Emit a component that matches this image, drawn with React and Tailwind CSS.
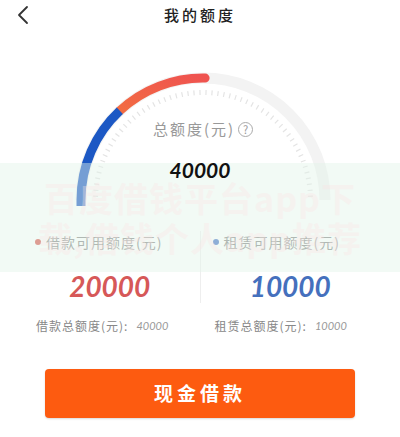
import React from 'react';

const CX = 203;
const CY = 168;
const R = 122;

const pt = (deg, r = R) => {
  const a = (deg * Math.PI) / 180;
  return [CX + r * Math.cos(a), CY - r * Math.sin(a)];
};

const Gauge = () => {
  const [lx, ly] = pt(180);
  const [rx, ry] = pt(0);
  const [bx, by] = pt(133);
  const [tx, ty] = pt(89);
  const ticks = [];
  for (let d = 178; d >= 2; d -= 3.2) {
    const [x1, y1] = pt(d, 105);
    const [x2, y2] = pt(d, 110);
    ticks.push(<line key={d} x1={x1} y1={y1} x2={x2} y2={y2} stroke="#e4e4e4" strokeWidth="1.2" />);
  }
  return (
    <svg width="400" height="185" viewBox="0 0 400 185" className="block">
      <defs>
        <linearGradient id="redArc" x1="0" y1="1" x2="1" y2="0">
          <stop offset="0" stopColor="#f26c42" />
          <stop offset="1" stopColor="#ef5350" />
        </linearGradient>
      </defs>
      <path d={`M${lx} ${ly} A${R} ${R} 0 0 1 ${rx} ${ry}`} fill="none" stroke="#f3f3f3" strokeWidth="11" />
      {ticks}
      <path d={`M${bx} ${by} A${R} ${R} 0 0 1 ${tx} ${ty}`} fill="none" stroke="url(#redArc)" strokeWidth="9" strokeLinecap="round" />
      <path d={`M${lx} ${ly + 6} L${lx} ${ly} A${R} ${R} 0 0 1 ${bx} ${by}`} fill="none" stroke="#1c58c4" strokeWidth="9" />
    </svg>
  );
};

const App = () => {
  return (
    <div className="relative w-[400px] h-[437px] bg-white overflow-hidden font-['Noto_Sans_CJK_SC','Noto_Sans',sans-serif]">
      {/* Header */}
      <div className="relative h-[32px] flex items-center justify-center">
        <svg className="absolute left-[14px] top-[4px]" width="18" height="22" viewBox="0 0 18 22">
          <path d="M13 3 L5 11 L13 19" fill="none" stroke="#333" strokeWidth="1.8" strokeLinecap="round" strokeLinejoin="round" />
        </svg>
        <span className="text-[15px] text-[#222] font-medium tracking-[3px] mt-[-2px]">我的额度</span>
      </div>

      {/* Gauge */}
      <div className="relative">
        <Gauge />
        <div className="absolute left-0 right-0 top-[86px] flex items-center justify-center gap-[3px] pl-[6px]">
          <span className="text-[15px] text-[#999] tracking-[2px]">总额度(元)</span>
          <span className="w-[15px] h-[15px] rounded-full border border-[#aaa] text-[11px] leading-[13px] text-[#999] text-center">?</span>
        </div>
        <div className="absolute z-10 left-0 right-0 top-[122px] text-center text-[21px] font-bold italic text-[#111] font-['Lato',sans-serif]">40000</div>
      </div>

      {/* Legend + numbers */}
      <div className="flex px-[20px] mt-[14px]">
        <div className="flex-1 flex flex-col border-r border-[#eeeeee]">
          <div className="flex items-center pl-[15px] h-[22px]">
            <span className="w-[6px] h-[6px] rounded-full bg-[#d9574d] mr-[5px]" />
            <span className="text-[14px] text-[#888] tracking-[1px]">借款可用额度(元)</span>
          </div>
          <div className="text-center mt-[16px] text-[28px] leading-[34px] font-bold italic text-[#d65858] font-['Lato',sans-serif]">20000</div>
        </div>
        <div className="flex-1 flex flex-col">
          <div className="flex items-center pl-[12px] h-[22px]">
            <span className="w-[6px] h-[6px] rounded-full bg-[#4a76c8] mr-[5px]" />
            <span className="text-[14px] text-[#888] tracking-[1px]">租赁可用额度(元)</span>
          </div>
          <div className="text-center mt-[16px] text-[28px] leading-[34px] font-bold italic text-[#4570bd] font-['Lato',sans-serif]">10000</div>
        </div>
      </div>

      {/* Totals */}
      <div className="flex px-[20px] mt-[14px]">
        <div className="flex-1 flex items-center pl-[16px] gap-[8px]">
          <span className="text-[12px] text-[#888] tracking-[1px]">借款总额度(元):</span>
          <span className="text-[11px] italic text-[#999] font-['Lato',sans-serif]">40000</span>
        </div>
        <div className="flex-1 flex items-center pl-[13px] gap-[8px]">
          <span className="text-[12px] text-[#888] tracking-[1px]">租赁总额度(元):</span>
          <span className="text-[11px] italic text-[#999] font-['Lato',sans-serif]">10000</span>
        </div>
      </div>

      {/* Button */}
      <div className="px-[45px] mt-[34px]">
        <button className="w-full h-[49px] rounded-[4px] bg-[#fd5b10] text-white text-[19px] font-bold tracking-[4px] shadow-[0_1px_2px_rgba(0,0,0,0.15)]">
          现金借款
        </button>
      </div>

      {/* Watermark overlay */}
      <div className="absolute left-0 right-0 top-[163px] h-[109px] bg-[#e2f4e9]/45 flex flex-col items-center justify-center pointer-events-none">
        <div className="text-[34px] leading-[40px] font-bold text-[#fbe4e4]/35 tracking-[1px]">百度借钱平台app下</div>
        <div className="text-[34px] leading-[40px] font-bold text-[#fbe4e4]/35 tracking-[1px]">载,借钱个人app推荐</div>
      </div>
    </div>
  );
};

export default App;
